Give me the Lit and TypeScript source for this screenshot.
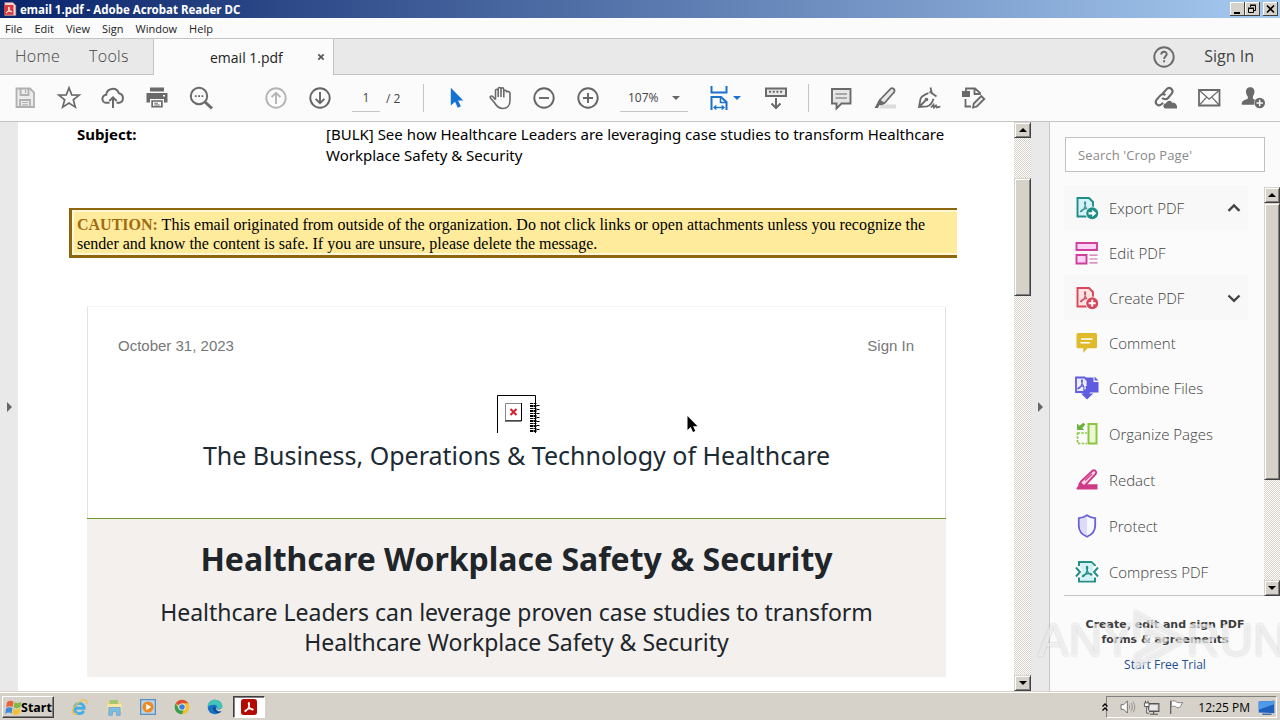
import { html, css, svg, LitElement } from 'lit';
import { customElement, property } from 'lit/decorators.js';
import { classMap } from 'lit/directives/class-map.js';

const pdfMark = svg`<path d="M11 6.5c1 0 .6 3.4-.6 6S7.200 17 6.600 16.400s2-2.300 4.600-2.700 5 .3 4.600 1-3-.6-4.200-3.200S10.200 6.500 11 6.500z"/>`;

// all glyphs are drawn on a 24 x 24 grid
const GLYPHS = {
  save: svg`<g fill="none" stroke="#b0b0b0" stroke-width="1.800"><path d="M3.500 2.500h13.500l4 4v14.500H3.500z" fill="#ececec"/><path d="M7.500 3v6h8V3M7 21v-7h10v7"/><path d="M12.500 4v3M9 16.500h6M9 18.800h6" stroke-width="1.200"/></g>`,
  star: svg`<path d="M12 1.800l2.700 7 7.500.3-5.900 4.700 2 7.300L12 17l-6.300 4.100 2-7.300L1.800 9.100l7.500-.3z" fill="none" stroke="#6a6a6a" stroke-width="1.700"/>`,
  cloud: svg`<g fill="none" stroke="#6a6a6a" stroke-width="2"><path d="M8.500 16.800H5.600a4 4 0 0 1-.4-8 6.500 6.500 0 0 1 12.600-1.600 4.900 4.900 0 0 1 .4 9.600h-2.700"/><path d="M12 22V11.500M8.300 15l3.700-3.700 3.700 3.700"/></g>`,
  print: svg`<g fill="#6a6a6a"><path d="M5 1.500h14v4H5zM1.500 7h21v9.500h-3.500V13H5v3.500H1.500zM6.300 14.300h11.400v7.200H6.300z"/><path d="M8 15.800h8v4.200H8z" fill="#fbfbfb"/><path d="M9.300 16.800h3.500v.9H9.300zM9.300 18.600h5.400v.9H9.300z"/><path d="M18 9h2v1.500h-2z" fill="#fbfbfb"/></g>`,
  search: svg`<g fill="none" stroke="#6a6a6a"><circle cx="10" cy="10" r="8.200" stroke-width="2"/><path d="M16 16l7 6.500" stroke-width="3"/></g><path d="M5.800 9.200h1.900v1.800H5.800zM9.100 9.200H11v1.800H9.100zM12.400 9.200h1.900v1.800h-1.900z" fill="#6a6a6a"/>`,
  up: svg`<g fill="none" stroke="#b5b5b5" stroke-width="1.900"><circle cx="12" cy="12" r="9.700"/><path d="M12 18V7M7.600 11.200L12 6.800l4.400 4.400"/></g>`,
  down: svg`<g fill="none" stroke="#666" stroke-width="1.900"><circle cx="12" cy="12" r="9.700"/><path d="M12 6v11M7.600 12.800l4.400 4.400 4.400-4.400"/></g>`,
  pointer: svg`<path d="M6.800 1.800v17.700l4.200-3.800 2.800 6 3.100-1.500-2.800-5.700h5.200z" fill="#1473d0"/>`,
  hand: svg`<path d="M7.500 13.500V4.800c0-2 2.700-2 2.700 0V11 3c0-2 2.800-2 2.800 0v8V3.400c0-2 2.800-2 2.800 0V11.500 5.800c0-2 2.700-2 2.700 0 .2 0 1.500-1.500 3.500 1.200v7.500c0 5-3 8-7.200 8-4.500 0-6.300-2.500-8.100-5.500L2.300 11.800c-.7-1.600 1.500-2.400 2.600-1.100l2.600 3.100" fill="none" stroke="#6a6a6a" stroke-width="1.600"/>`,
  minus: svg`<g fill="none" stroke="#666" stroke-width="1.900"><circle cx="12" cy="12" r="9.700"/><path d="M7 12h10"/></g>`,
  plus: svg`<g fill="none" stroke="#666" stroke-width="1.900"><circle cx="12" cy="12" r="9.700"/><path d="M7 12h10M12 7v10"/></g>`,
  fit: svg`<g fill="none" stroke="#1b72c9" stroke-width="2"><path d="M4.500 0v6.500h15V0M4.500 24V11H14l5.500 5V24"/><path d="M13.500 11v5.500h6" stroke-width="1.500"/><path d="M7.500 21.500h9" stroke-width="1.400"/></g><path d="M6 21.500l3.300-2.700v5.400zM18 21.500l-3.300-2.700v5.400z" fill="#1b72c9"/>`,
  scrollbar: svg`<g fill="none" stroke="#6a6a6a" stroke-width="2"><path d="M2 2.500h20v7.500H2z" fill="#e8e8e8"/><path d="M5 5.800h14" stroke-dasharray="2 1.700"/><path d="M12 12v9.500M7.500 17.500l4.500 4.500 4.500-4.500"/></g>`,
  comment: svg`<g stroke="#6a6a6a"><path d="M3 3h18.500v14.500h-9l-5 5v-5H3z" fill="#e6e6e6" stroke-width="1.900"/><path d="M6.500 8h11.500M6.500 12h11.500" stroke-width="1.200"/></g>`,
  highlight: svg`<path d="M9 18.500h14v4H6z" fill="#dcdcdc"/><path d="M7.300 13.500L17.500 2.800c2-1.800 5 .6 3.700 3.200L11.500 17l-4 1.500-2-2z" fill="#e8e8e8" stroke="#6a6a6a" stroke-width="1.700"/><path d="M6.500 13l5.800 4.500-3.500 1.500H6.500l-1.500 3H1.500z" fill="#6a6a6a"/>`,
  sign: svg`<g fill="none" stroke="#6a6a6a" stroke-width="1.800"><path d="M13.500 1.500L15 8M12.500 5.500l7 5M11.500 7C7 9 4 10 3.500 13L2 21l8-.7c3.800-.5 5.300-3.700 6.500-7.500M2.500 20.500l6-6"/><path d="M14 21.500l2.500-2.700.5 2.700 2-2 .8 2 3.500-.8"/></g><circle cx="9.500" cy="13.500" r="1.800" fill="#6a6a6a"/>`,
  edit: svg`<g fill="none" stroke="#6a6a6a" stroke-width="1.800"><path d="M5 5V2.500h9l5 4.500V9M13.500 3v5h4.500M4.500 13v7.500H10"/><path d="M12 21.500l.8-4 7.500-7.500 3 3-7.500 7.500z" fill="#eee"/></g><path d="M1 5h8v6H1z" fill="#6a6a6a"/>`,
  link: svg`<g fill="none" stroke="#6a6a6a" stroke-width="2.100"><path d="M9.500 7.800l4.200-4.700c3-3 7.700 1 5 4.500L15 12c-1.500 1.800-4.500 1.700-5.800-.3"/><path d="M12.500 9c-1.800-1.400-3.800-1-5.300.6L3.500 13.800c-2.500 3.500 2 7.400 5 4.500l1.500-1.600"/></g><path d="M12 22.500a2.700 2.700 0 0 1 1-5.200c1-3.500 5.500-3.300 6.200-.5 3-.8 5.400 1.800 4.800 5.700z" fill="#6a6a6a"/>`,
  mail: svg`<g fill="none" stroke="#6a6a6a" stroke-width="1.800"><path d="M2 4h20.500v15.500H2z"/><path d="M2 4l10.200 9.300L22.500 4M2 19.500l7.700-8.300M22.500 19.500l-7.700-8.300" stroke-width="1.200"/></g>`,
  user: svg`<path d="M9.200 1.300c3.400 0 4.700 2.500 4.200 5.500-.3 2-1.300 2.900-1.500 3.900v2l2.100 1a6.200 6.200 0 0 0-1 5H.800c-.3-3 .7-4 6-5.900v-2.200c-.8-.9-1.400-1.800-1.700-3.800-.5-3 .8-5.500 4.100-5.500z" fill="#6a6a6a"/><circle cx="18.700" cy="17" r="5.300" fill="#6a6a6a"/><path d="M15.500 17h6.400M18.700 13.800v6.400" stroke="#fbfbfb" stroke-width="1.400"/>`,
  help: svg`<circle cx="12" cy="12" r="9.700" fill="none" stroke="#6a6a6a" stroke-width="1.900"/><path d="M9.200 9.600c.1-4 5.800-3.600 5.500-.3-.2 2-2.500 2-2.600 4.700" fill="none" stroke="#6a6a6a" stroke-width="1.900"/><path d="M11.100 15.300h2v2h-2z" fill="#6a6a6a"/>`,
  export: svg`<path d="M2.500 2h11.500l4 4v14.500H2.500z" fill="#d3f1f7" stroke="#1c8f87" stroke-width="1.900"/><g fill="none" stroke="#3b8f95" stroke-width="1.100" transform="translate(-1 -.8)">${pdfMark}</g><circle cx="17.200" cy="17.300" r="6.800" fill="#fbfbfb"/><circle cx="17.200" cy="17.300" r="6" fill="#1c8f87"/><path d="M13.500 16.200h3.700v-2.500l4.200 3.600-4.200 3.600v-2.500h-3.700z" fill="#fff"/>`,
  editPdf: svg`<g fill="#fbd3f4" stroke="#cf3f9c" stroke-width="1.900"><path d="M1.500 2h20.500v7H1.500zM1.500 14h10v8.500h-10z"/></g><path d="M14.500 14.200h8M14.500 18h8M14.500 21.800h8" stroke="#d06aae" stroke-width="1.200"/>`,
  create: svg`<path d="M2.500 2h11.500l4 4v14.500H2.500z" fill="#fde2e0" stroke="#d9475a" stroke-width="1.900"/><g fill="none" stroke="#c4525f" stroke-width="1.100" transform="translate(-1 -.8)">${pdfMark}</g><circle cx="17.200" cy="17.300" r="6.800" fill="#fbfbfb"/><circle cx="17.200" cy="17.300" r="6" fill="#d9475a"/><path d="M13.700 17.300h7M17.200 13.800v7" stroke="#fff" stroke-width="2"/>`,
  note: svg`<path d="M3 2h17.500a1.500 1.500 0 0 1 1.500 1.500v12.300a1.500 1.500 0 0 1-1.500 1.500h-8L8.300 22v-4.700H3a1.500 1.500 0 0 1-1.500-1.500V3.500A1.500 1.500 0 0 1 3 2z" fill="#dfbb2c"/><path d="M6 8h11.500M5.500 11.800h9.500" stroke="#fff" stroke-width="1.600"/>`,
  combine: svg`<path d="M10.500 1.500h8v4.500h5v10.500h-13zM19.500.5l4 4h-4z" fill="#5f5ce0"/><path d="M1 1.500h8.500l3 3v11.500H1z" fill="#ecedff" stroke="#5f5ce0" stroke-width="1.800"/><g fill="none" stroke="#5f5ce0" stroke-width="1.200" transform="translate(-3 -2) scale(.9)">${pdfMark}</g><path d="M8.300 10h6.500v7.500h3.500l-6.300 6-6-6h2.300z" fill="#5f5ce0"/><path d="M10 8v5.500" stroke="#fff" stroke-width="1.200"/>`,
  organize: svg`<path d="M13.500 2h8v19.500h-8z" fill="#e9f8d3" stroke="#8cc63f" stroke-width="2"/><path d="M2.500 10.500v11H12M2.500 11H12" fill="none" stroke="#8cc63f" stroke-width="1.700" stroke-dasharray="2.500 1.300"/><path d="M2 1.500l2.300 2.300L8.500.8l1.700 1.700-3 3.700L9.500 8H2z" fill="#6bb23a"/>`,
  redact: svg`<path d="M8 16.200h14.500v5.300H1.500l2.200-4 3.800.7z" fill="#cf3a86"/><path d="M6 13.500L17.500 2.800c2-1.500 4.700.7 3.200 3.100L10 17.500l-4 1-1.700-2z" fill="#fbd7ee" stroke="#cf3a86" stroke-width="1.900"/><path d="M10 12.500l7-6.500" stroke="#cf3a86" stroke-width="1.200"/><path d="M5.500 14l4 3.500-4 3.500H1.200z" fill="#cf3a86"/>`,
  protect: svg`<path d="M12 1.200c2.500 1.800 5.200 2.700 8.200 3v7.300c0 5.500-3 9-8.200 11.300-5.200-2.300-8.200-5.800-8.200-11.300V4.200c3-.3 5.700-1.200 8.200-3z" fill="#f8f8ff" stroke="#6a5fd8" stroke-width="1.800"/><path d="M12 2.500v19c-4.500-2.200-7-5.200-7-10V5.200c2.500-.3 4.800-1.200 7-2.700z" fill="#dcdcfa"/>`,
  compress: svg`<path d="M4 6V2h12.500L20 5.500V6M4 17.500v4h16v-4" fill="none" stroke="#278f85" stroke-width="2"/><path d="M5 3h11.300L19 5.800 17 12l2 6v2.500H5V18l2-6-2-6z" fill="#d3f1f7"/><path d="M1 7.500L5 12l-4 4.500M23 7.500L19 12l4 4.500" fill="none" stroke="#278f85" stroke-width="2"/><g fill="none" stroke="#278f85" stroke-width="1.400" transform="translate(1)">${pdfMark}</g>`,
  chevronUp: svg`<path d="M6.500 14.800L12 9.500l5.500 5.300" fill="none" stroke="#444" stroke-width="2.400"/>`,
  chevronDown: svg`<path d="M6.500 9.500l5.500 5.300 5.500-5.300" fill="none" stroke="#444" stroke-width="2.400"/>`,
  close: svg`<path d="M4 4l16 16M20 4L4 20" stroke="#555" stroke-width="5"/>`,
  acrobat: svg`<rect width="24" height="24" rx="4" fill="#b30b00"/><g fill="none" stroke="#fff" stroke-width="1.500" transform="translate(-2.500 -3) scale(1.300)">${pdfMark}</g>`,
  acrobatDoc: svg`<path d="M3 1h14l5 5v17H3z" fill="#f6dede" stroke="#b9797c"/><path d="M2 5h16v17H2z" fill="#d63a3a"/><g fill="none" stroke="#fff" stroke-width="1.700" transform="translate(-1 2)">${pdfMark}</g>`,
  ie: svg`<g fill="none" stroke="#45aee6" stroke-width="4"><path d="M5 13h13.500C18.500 3.500 5 4 5 13s10 9.500 13 4"/></g><path d="M2.500 20C-.5 13 16-2.500 22 2.500c1 1.300.5 3-.3 4.500M2.500 20c1 1.500 3.500 1.700 6 .3" fill="none" stroke="#edc33a" stroke-width="1.800"/>`,
  folder: svg`<path d="M2 3h7l1 2h12v14H2z" fill="#ecd382"/><path d="M5 1.500h12v7H5z" fill="#a2c86e"/><path d="M2 7h20v11H2z" fill="#f6e6a2"/><path d="M4 12h16v11h-5v-5H9v5H4z" fill="#7fbce4" stroke="#5d9ccb"/>`,
  media: svg`<path d="M1 1h22v22H1z" fill="#b9d3ea" stroke="#5c91bf" stroke-width="2"/><circle cx="12" cy="12" r="8.300" fill="#f08a1c"/><path d="M9.300 7v10l7.700-5z" fill="#fff"/>`,
  chrome: svg`<circle cx="12" cy="12" r="11" fill="#f3c12f"/><path d="M12 12L2.500 6.500A11 11 0 0 1 21.500 6.500H12z" fill="#dd4b3a"/><path d="M12 23A11 11 0 0 1 2.500 6.500l4.700 8.300L12 17l2.500-.5z" fill="#39a050"/><circle cx="12" cy="12" r="5.300" fill="#fff"/><circle cx="12" cy="12" r="4.200" fill="#3c7de0"/>`,
  edge: svg`<circle cx="12" cy="12" r="11" fill="#1673c4"/><path d="M1 12C1 5 6 1 12 1c7 0 11 5 11 9.500 0 5-6 6-8 4.500 2-3-.5-6.500-4.500-6.500-4 0-8 1-9.500 3.500z" fill="#43c4b8"/><path d="M9 12c-1 5 3 9 8 9 2 0 4-1.500 5-3-4 1.500-9.500 0-9-4 0-2-3-4-4-2z" fill="#0f4f96"/><path d="M13.500 11.500c1.500 1 .8 3 .8 3.500 2 1.800 7 1 8.700-2.500l.5 5c-4 2-9.500.5-10-3z" fill="#d6d2ca"/>`,
  windows: svg`<g transform="skewX(-9) translate(2 0)"><path d="M3 4.500c3-2.500 6-2.500 9-.6v7.500c-3-1.800-6-1.800-9 .5z" fill="#e8623a"/><path d="M13.500 4.500c3 1.500 6 1.500 9.500-.6v7.700c-3.500 2-6.500 2-9.500.5z" fill="#7fbb42"/><path d="M3 13.500c3-2.300 6-2.300 9-.5v7.500c-3-1.900-6-1.900-9 .5z" fill="#3d8cd8"/><path d="M13.500 13.700c3 1.500 6 1.500 9.500-.5v7.500c-3.500 2.200-6.500 2.200-9.500.6z" fill="#f1c131"/></g>`,
  trayUp: svg`<path d="M7 11l5-5 5 5M7 19l5-5 5 5" fill="none" stroke="#000" stroke-width="2.600"/>`,
  sound: svg`<path d="M3 8.500h4L12.500 3v18L7 15.500H3z" fill="#fff" stroke="#666" stroke-width="1.400"/><path d="M15 8.500c1.500 2 1.500 5 0 7M18 6c2.700 3.500 2.700 8.500 0 12M21 4c3.500 5 3.500 11 0 16" fill="none" stroke="#888" stroke-width="1.300"/>`,
  network: svg`<path d="M7.500 6.500h15v11h-15z" fill="#b8b8b8" stroke="#555" stroke-width="1.500"/><path d="M9.500 8.500h11v7h-11z" fill="#e7e7e7"/><path d="M10 21.500h11M15 18v3" stroke="#555" stroke-width="1.600"/><path d="M2 5.500h6.500v5H2zM3.500 2.500v3M7 2.500v3M5.200 10.500v9.500h4" fill="#fff" stroke="#555" stroke-width="1.400"/>`,
  flag: svg`<path d="M4 2.500v20" stroke="#666" stroke-width="2"/><path d="M5 3.500c3-1.500 5.500-.8 8 1.200 2.500 1 5.500 1.300 9 .3-1.500 3-3 6-5 8-3 .5-4.500-.5-6-1.800-2-.8-4-.5-6 .6z" fill="#fff" stroke="#777" stroke-width="1.300"/>`,
  desktop: svg`<path d="M1 3.500l22-1v17.500l-22-1z" fill="#1e5fc0"/><path d="M1 3.500l22-1v5L1 15z" fill="#4e9ae8"/><path d="M6 21.500h13" stroke="#3b6ba8" stroke-width="2"/>`,
};

type GlyphName = keyof typeof GLYPHS;

const glyph = (name: GlyphName, size = 24) => html`
  <svg class="glyph" width=${size} height=${size} viewBox="0 0 24 24">${GLYPHS[name]}</svg>
`;

const glyphStyles = css`
  .glyph {
    display: block;
    flex: none;
    overflow: visible;
  }
`;

/**
 * Classic beveled vertical scroll bar.
 *
 * @property {number} start - Offset of the thumb below the upper button, in pixels.
 * @property {number} size - Height of the thumb, in pixels.
 */
@customElement('classic-scrollbar')
export class ClassicScrollbar extends LitElement {
  @property({ type: Number }) start = 0;
  @property({ type: Number }) size = 100;

  render() {
    return html`
      <div class="button"><i class="arrow up"></i></div>
      <div class="track">
        <div class="thumb" style="margin-top:${this.start}px;height:${this.size}px"></div>
      </div>
      <div class="button"><i class="arrow"></i></div>
    `;
  }

  static styles = css`
    :host {
      background: repeating-conic-gradient(#fff 0 25%, #d6d2ca 0 50%) 0 0 / 2px 2px;
      box-sizing: border-box;
      display: flex;
      flex-direction: column;
      width: 17px;
    }

    .button,
    .thumb {
      background: #d6d2ca;
      border: 1px solid;
      border-color: #d6d2ca #404040 #404040 #d6d2ca;
      box-shadow: inset 1px 1px #fff, inset -1px -1px #808080;
      box-sizing: border-box;
    }

    .button {
      align-items: center;
      display: flex;
      flex: none;
      height: 16px;
      justify-content: center;
    }

    .track {
      flex: 1;
      min-height: 0;
    }

    .arrow {
      border: 4px solid transparent;
      border-bottom-width: 0;
      border-top-color: #000;
    }

    .arrow.up {
      border-bottom: 4px solid #000;
      border-top-width: 0;
    }
  `;
}

const TOOLS: { icon: GlyphName; label: string; chevron?: GlyphName; tall?: boolean }[] = [
  { icon: 'export', label: 'Export PDF', chevron: 'chevronUp' },
  { icon: 'editPdf', label: 'Edit PDF' },
  { icon: 'create', label: 'Create PDF', chevron: 'chevronDown' },
  { icon: 'note', label: 'Comment' },
  { icon: 'combine', label: 'Combine Files', tall: true },
  { icon: 'organize', label: 'Organize Pages', tall: true },
  { icon: 'redact', label: 'Redact', tall: true },
  { icon: 'protect', label: 'Protect', tall: true },
  { icon: 'compress', label: 'Compress PDF', tall: true },
];

@customElement('tools-panel')
export class ToolsPanel extends LitElement {
  render() {
    return html`
      <div class="search">Search 'Crop Page'</div>
      <div class="list">
        <div class="rows">
          ${TOOLS.map(
            (tool) => html`
              <div class=${classMap({ row: true, tall: !!tool.tall, group: !!tool.chevron })}>
                ${glyph(tool.icon)}
                <span class="label">${tool.label}</span>
                ${tool.chevron ? glyph(tool.chevron) : ''}
              </div>
            `
          )}
        </div>
        <classic-scrollbar start="0" size="277"></classic-scrollbar>
      </div>
      <div class="promo">
        <div class="pitch">Create, edit and sign PDF</div>
        <div class="pitch second">forms &amp; agreements</div>
        <div class="trial">Start Free Trial</div>
      </div>
    `;
  }

  static styles = [
    glyphStyles,
    css`
      :host {
        background: #fbfbfb;
        border-left: 1px solid #c6c6c6;
        box-sizing: border-box;
        display: flex;
        flex-direction: column;
        font-family: 'Open Sans', 'Noto Sans', sans-serif;
        width: 231px;
      }

      .search {
        background: #fff;
        border: 1px solid #c0c0c0;
        box-sizing: border-box;
        color: #8a8a8a;
        font-size: 13px;
        height: 35px;
        letter-spacing: 0.1px;
        line-height: 34px;
        margin: 15px 15px 13px;
        padding-left: 12px;
      }

      .list {
        display: flex;
        height: 411px;
        padding-left: 14px;
      }

      .rows {
        border-bottom: 1px solid #c4c4c4;
        box-sizing: border-box;
        flex: 1;
        overflow: hidden;
      }

      .row {
        align-items: center;
        box-sizing: border-box;
        display: flex;
        gap: 10px;
        height: 45px;
        margin-right: 16px;
        padding: 0 2px 0 11px;
      }

      .row.tall {
        height: 46px;
      }

      .row.group {
        background: #f8f8f8;
      }

      .label {
        color: #404040;
        flex: 1;
        font-size: 15px;
        font-weight: 300;
        white-space: nowrap;
      }

      classic-scrollbar {
        margin-top: 2px;
        width: 16px;
      }

      .promo {
        color: #3d3d3d;
        padding-top: 21px;
        text-align: center;
      }

      .pitch {
        font-family: 'DejaVu Sans', sans-serif;
        font-size: 11px;
        font-weight: bold;
        line-height: 15px;
      }

      .trial {
        color: #1d4f8f;
        font-size: 12px;
        line-height: 16px;
        margin-top: 10px;
      }
    `,
  ];
}

@customElement('mail-page')
export class MailPage extends LitElement {
  render() {
    return html`
      <div class="subject">
        <b class="key">Subject:</b>
        <div>
          <div class="first">[BULK] See how Healthcare Leaders are leveraging case studies to transform Healthcare</div>
          <div class="next">Workplace Safety &amp; Security</div>
        </div>
      </div>

      <div class="caution">
        <div class="first"><b>CAUTION:</b> This email originated from outside of the organization. Do not click links or open attachments unless you recognize the</div>
        <div class="next">sender and know the content is safe. If you are unsure, please delete the message.</div>
      </div>

      <div class="card">
        <div class="meta"><span>October 31, 2023</span><span>Sign In</span></div>
        <svg class="missing" width="46" height="39" viewBox="0 0 46 39">
          <path d="M.5 38V.5H38.500V38" fill="none" stroke="#000" />
          <path d="M8.500 8.500h16v17h-16z" fill="#fff" stroke="#888" />
          <path d="M24.500 8v18H8" fill="none" stroke="#000" />
          <path d="M13.500 14l6 6M19.500 14l-6 6" stroke="#d2232a" stroke-width="2" />
          <path d="M34.500 8v30M38 8v30" stroke="#000" stroke-width="3" stroke-dasharray="1 1 2 1" />
          <path d="M41 10v26" stroke="#000" stroke-width="3" stroke-dasharray="1 3" />
        </svg>
        <div class="tagline">The Business, Operations &amp; Technology of Healthcare</div>
        <div class="banner">
          <div class="title">Healthcare Workplace Safety &amp; Security</div>
          <div class="lead">Healthcare Leaders can leverage proven case studies to transform</div>
          <div class="lead end">Healthcare Workplace Safety &amp; Security</div>
        </div>
      </div>
    `;
  }

  static styles = css`
    :host {
      background: #fff;
      display: block;
      overflow: hidden;
      white-space: nowrap;
    }

    .subject {
      display: flex;
      font: 15px/21px 'Noto Sans', sans-serif;
      padding: 2px 0 0 59px;
    }

    .key {
      width: 249px;
    }

    .caution {
      background: #ffeb9c;
      border: solid #8e660f;
      border-width: 2px 0 3px 3px;
      box-shadow: inset 0 2px #fff6d6, inset 2px 0 #fff6d6, inset 0 -2px #fff6d6;
      box-sizing: border-box;
      font: 16px/19px 'Liberation Serif', serif;
      height: 50px;
      margin: 42px 57px 0 51px;
      padding: 5px 0 0 5px;
    }

    .caution b {
      color: #a06a13;
    }

    .card {
      border: solid #e3e3e3;
      border-width: 0 1px;
      box-shadow: 0 -1px #f6f6f6;
      margin: 49px 68px 0 69px;
      text-align: center;
    }

    .meta {
      color: #777;
      display: flex;
      font: 15px/20px 'Liberation Sans', sans-serif;
      justify-content: space-between;
      padding: 29px 31px 0 30px;
    }

    .missing {
      display: block;
      margin: 39px 0 0 409px;
    }

    .tagline {
      color: #1b2a33;
      font: 25px/36px 'Noto Sans', sans-serif;
      margin-top: 3px;
    }

    .banner {
      background: #f3f0ee;
      border-top: 1px solid #6f9a2c;
      box-sizing: border-box;
      color: #20252a;
      font-family: 'Noto Sans', sans-serif;
      height: 159px;
      margin: 45px -1px 0;
      padding-top: 18px;
    }

    .title {
      font-size: 32px;
      font-weight: bold;
      line-height: 44px;
    }

    .lead {
      font-size: 23px;
      line-height: 30px;
      margin-top: 16px;
    }

    .lead.end {
      margin-top: 0;
    }
  `;
}

@customElement('app-root')
export class AppRoot extends LitElement {
  slots(...names: GlyphName[]) {
    return names.map((name) => html`<span class="slot">${glyph(name)}</span>`);
  }

  render() {
    return html`
      <header class="titlebar">
        ${glyph('acrobatDoc', 14)}
        <b>email 1.pdf - Adobe Acrobat Reader DC</b>
        <span class="caption">
          <svg width="15" height="14" viewBox="0 0 15 14"><path d="M4 10h6v2H4z" /></svg>
          <svg width="15" height="14" viewBox="0 0 15 14"><path d="M5.500 5V3.500h5v5H9M5 3h6M3.500 6.500h5v4h-5zM3 6h6" fill="none" stroke="#000" /></svg>
          <svg class="last" width="15" height="14" viewBox="0 0 15 14"><path d="M4 3.500l7 7M11 3.500l-7 7" stroke="#000" stroke-width="1.700" /></svg>
        </span>
      </header>

      <nav class="menu">
        <span>File</span><span>Edit</span><span>View</span><span>Sign</span><span>Window</span><span>Help</span>
      </nav>

      <div class="tabs">
        <div class="fixed"><span>Home</span><span>Tools</span></div>
        <div class="tab"><span class="name">email 1.pdf</span>${glyph('close', 8)}</div>
        <div class="account">${glyph('help')}<span>Sign In</span></div>
      </div>

      <div class="toolbar">
        <div class="tools lead">${this.slots('save', 'star', 'cloud', 'print', 'search')}</div>
        <div class="tools paging">${this.slots('up', 'down')}</div>
        <span class="field page">1</span>
        <span class="total">/ 2</span>
        <i class="rule"></i>
        <div class="tools move">${this.slots('pointer', 'hand', 'minus', 'plus')}</div>
        <span class="field zoom">107%<i class="caret"></i></span>
        <span class="fit">${glyph('fit')}<i class="caret blue"></i></span>
        <span class="scroll">${glyph('scrollbar')}</span>
        <i class="rule"></i>
        <div class="tools marks">${this.slots('comment', 'highlight', 'sign', 'edit')}</div>
        <div class="tools share">${this.slots('link', 'mail', 'user')}</div>
      </div>

      <main class="work">
        <div class="rail"><i class="grip"></i></div>
        <mail-page></mail-page>
        <classic-scrollbar class="bar" start="40" size="118"></classic-scrollbar>
        <div class="rail right"><i class="grip"></i></div>
        <tools-panel></tools-panel>
      </main>

      <footer class="taskbar">
        <div class="start">${glyph('windows', 17)}<b>Start</b></div>
        <div class="pinned">
          ${glyph('ie', 17)} ${glyph('folder', 17)} ${glyph('media', 16)} ${glyph('chrome', 16)} ${glyph('edge', 16)}
        </div>
        <div class="task">${glyph('acrobat', 16)}</div>
        <div class="tray">
          ${glyph('trayUp', 12)} ${glyph('sound', 16)} ${glyph('network', 17)} ${glyph('flag', 16)}
          <span class="clock">12:25 PM</span>
          ${glyph('desktop', 17)}
        </div>
      </footer>

      <svg class="cursor" width="12" height="18" viewBox="0 0 12 18">
        <path d="M.5 1v14l3.200-3 2.300 5 2.300-1-2.200-4.800h4.400z" fill="#000" />
      </svg>

      <div class="watermark">
        <span>ANY</span>
        <svg width="54" height="62" viewBox="0 0 54 62">
          <path d="M4 30V5l46 26L4 57V47l28-16L14 21v14" />
        </svg>
        <span>RUN</span>
      </div>
    `;
  }

  // --- styles ---

  static styles = [
    glyphStyles,
    css`
      :host {
        background: #fbfbfb;
        display: flex;
        flex-direction: column;
        font-family: 'Open Sans', 'Noto Sans', sans-serif;
        height: 720px;
        overflow: hidden;
        position: relative;
        white-space: nowrap;
        width: 1280px;
      }

      .titlebar {
        align-items: center;
        background: linear-gradient(90deg, #0a246a, #a6caf0);
        box-sizing: border-box;
        color: #fff;
        display: flex;
        font: 11.5px 'DejaVu Sans Condensed', sans-serif;
        font-family: 'Noto Sans', sans-serif;
        gap: 3px;
        height: 18px;
        padding: 0 2px 0 3px;
      }

      .caption {
        display: flex;
        margin-left: auto;
      }

      .caption svg {
        background: #d6d2ca;
        box-shadow: inset -1px -1px #404040, inset 1px 1px #fff;
      }

      .caption .last {
        margin-left: 3px;
      }

      .menu {
        align-items: center;
        border-bottom: 1px solid #c4c4c4;
        box-sizing: border-box;
        color: #222;
        display: flex;
        font-size: 11px;
        gap: 12px;
        height: 21px;
        padding: 0 0 0 5px;
      }

      .tabs {
        background: #e9e9e9;
        box-sizing: border-box;
        color: #444;
        display: flex;
        font-size: 16px;
        height: 36px;
        line-height: 35px;
      }

      .fixed {
        border-bottom: 1px solid #c4c4c4;
        box-sizing: border-box;
        display: flex;
        gap: 29px;
        letter-spacing: 0.3px;
        padding-left: 15px;
        width: 153px;
      }

      .fixed span {
        font-weight: 300;
      }

      .tab {
        align-items: center;
        background: #fbfbfb;
        border: solid #c4c4c4;
        border-width: 0 1px;
        box-sizing: border-box;
        color: #222;
        display: flex;
        font-size: 14px;
        padding-left: 56px;
        width: 181px;
      }

      .name {
        width: 107px;
      }

      .account {
        align-items: center;
        border-bottom: 1px solid #c4c4c4;
        box-sizing: border-box;
        display: flex;
        flex: 1;
        gap: 28px;
        justify-content: flex-end;
        padding-right: 26px;
      }

      .toolbar {
        align-items: center;
        border-bottom: 1px solid #c4c4c4;
        box-sizing: border-box;
        display: flex;
        height: 47px;
      }

      .tools {
        display: flex;
      }

      .slot {
        display: flex;
        justify-content: center;
        width: 44px;
      }

      .lead {
        margin-left: 3px;
      }

      .paging {
        margin-left: 31px;
      }

      .field {
        border-bottom: 1px solid #c4c4c4;
        box-sizing: border-box;
        color: #444;
        font-size: 12px;
        height: 28px;
        line-height: 28px;
      }

      .page {
        margin-left: 10px;
        text-align: center;
        width: 28px;
      }

      .total {
        color: #444;
        font-size: 12px;
        margin-left: 6px;
        width: 37px;
      }

      .rule {
        background: #c4c4c4;
        height: 28px;
        width: 1px;
      }

      .move {
        margin-left: 10px;
      }

      .zoom {
        align-items: center;
        display: flex;
        justify-content: space-between;
        margin-left: 10px;
        padding: 0 8px;
        width: 68px;
      }

      .caret {
        border: 4px solid transparent;
        border-bottom-width: 0;
        border-top-color: #666;
      }

      .caret.blue {
        border-top-color: #1b72c9;
      }

      .fit {
        align-items: center;
        display: flex;
        gap: 2px;
        margin-left: 19px;
      }

      .scroll {
        margin: 0 20px 0 23px;
      }

      .marks {
        margin-left: 10px;
      }

      .share {
        margin: 0 5px 0 auto;
      }

      .work {
        display: flex;
        height: 569px;
      }

      .rail {
        align-items: center;
        background: #e9e9e9;
        display: flex;
        justify-content: center;
        width: 18px;
      }

      .grip {
        border: 5px solid transparent;
        border-left-color: #666;
        border-right-width: 0;
      }

      mail-page {
        flex: 1;
      }

      .taskbar {
        align-items: center;
        background: #d6d2ca;
        border-top: 1px solid #d6d2ca;
        box-shadow: inset 0 1px #fff;
        box-sizing: border-box;
        display: flex;
        height: 29px;
        padding: 2px 3px 0 2px;
      }

      .start,
      .task {
        align-items: center;
        box-sizing: border-box;
        display: flex;
        height: 22px;
      }

      .start {
        border: 1px solid;
        border-color: #fff #404040 #404040 #fff;
        box-shadow: inset -1px -1px #808080;
        font: 12.5px 'Noto Sans', sans-serif;
        padding-left: 1px;
        width: 52px;
      }

      .pinned {
        align-items: center;
        display: flex;
        gap: 17.5px;
        padding-left: 17px;
      }

      .task {
        background: #fff;
        border: 1px solid;
        border-color: #404040 #fff #fff #404040;
        box-shadow: inset 1px 1px #808080;
        justify-content: center;
        margin-left: 10px;
        width: 32px;
      }

      .tray {
        align-items: center;
        border: 1px solid;
        border-color: #808080 #fff #fff #808080;
        box-sizing: border-box;
        display: flex;
        gap: 8px;
        height: 22px;
        justify-content: flex-end;
        margin-left: auto;
        padding-right: 1px;
        width: 171px;
      }

      .clock {
        font-size: 12px;
        margin-left: 6px;
      }

      .cursor {
        left: 687px;
        position: absolute;
        top: 415px;
      }

      .watermark {
        align-items: center;
        color: rgba(255, 255, 255, 0.6);
        display: flex;
        filter: drop-shadow(0 0 1px rgba(120, 120, 120, 0.6));
        font: 46px 'Liberation Sans', sans-serif;
        left: 1038px;
        position: absolute;
        top: 609px;
      }

      .watermark svg {
        fill: none;
        stroke: rgba(255, 255, 255, 0.6);
        stroke-width: 5;
      }
    `,
  ];
}
